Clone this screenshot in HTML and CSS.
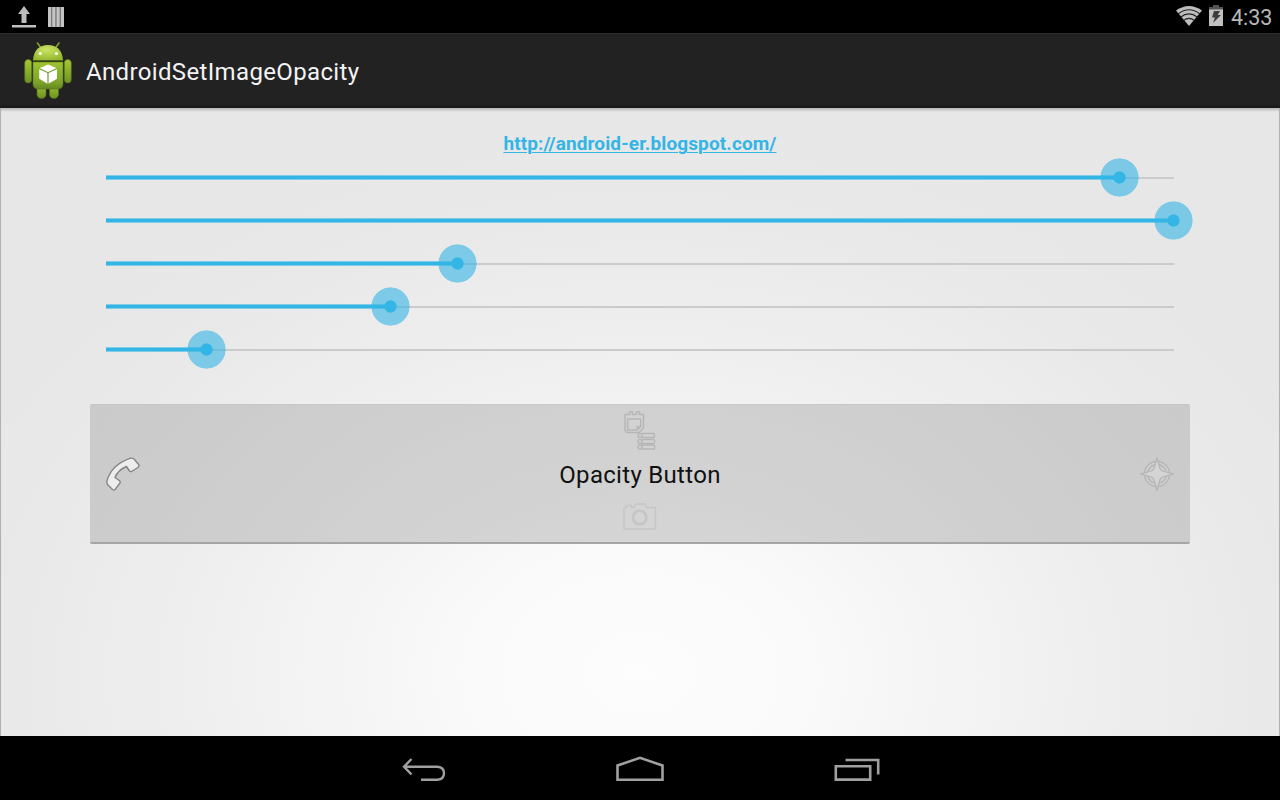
FILE: index.html
```html
<!DOCTYPE html>
<html lang="en">
<head>
<meta charset="utf-8">
<title>AndroidSetImageOpacity</title>
<link rel="stylesheet" href="styles.css">
</head>
<body>
<div class="status">
  <svg class="upload" width="24" height="22" viewBox="0 0 24 22"><path fill="#bebebe" d="M12 0l6 8h-3.500v9h-5V8H6zM0 19h24v2.500H0z"/></svg>
  <svg class="bars" width="16" height="20" viewBox="0 0 16 20"><path fill="#7a7a7a" d="M0 0h16v20H0z"/><path fill="#c4c4c4" d="M0 0h3v20H0zM4.300 0h3v20h-3zM8.600 0h3v20h-3zM13 0h3v20h-3z"/></svg>
  <svg class="wifi" width="26" height="20" viewBox="0 0 26 20"><path fill="#bebebe" d="M0 4.500Q13-4.500 26 4.500L13 20z"/><path d="M2 8Q13-.5 24 8M4.500 11.200Q13 4.500 21.500 11.200M7.500 14.600Q13 10 18.500 14.600" fill="none" stroke="#222" stroke-width="1.200"/></svg>
  <svg class="battery" width="14" height="21" viewBox="0 0 14 21"><path fill="#555" d="M4 0h6v2h4v3H0V2h4z"/><path fill="#c0c0c0" d="M0 4.500h14V21H0z"/><path fill="#3c3c3c" d="M5 6h6L8.700 10H12L4 18l2-5.500H3z"/></svg>
  <span class="clock">4:33</span>
</div>
<header class="bar">
  <svg class="robot" width="48" height="58" viewBox="0 0 48 58">
    <defs>
      <linearGradient id="skin" x2="0" y2="1"><stop stop-color="#a9c833"/><stop offset="1" stop-color="#6b9322"/></linearGradient>
      <linearGradient id="torso" x2="0" y2="1"><stop stop-color="#9fc32e"/><stop offset=".75" stop-color="#7ba329"/><stop offset="1" stop-color="#648820"/></linearGradient>
      <radialGradient id="dome" cx=".45" cy=".3" r=".75"><stop stop-color="#cbe364"/><stop offset="1" stop-color="#91b72a"/></radialGradient>
    </defs>
    <path d="M13.500 1l3.500 5M35 1l-3.500 5" stroke="#81a129" stroke-width="1.600" stroke-linecap="round"/>
    <g fill="url(#skin)" stroke="#526f1b" stroke-width=".6">
      <rect x=".7" y="17.500" width="7" height="23.500" rx="3.500"/><rect x="40.300" y="17.500" width="7" height="23.500" rx="3.500"/>
      <rect x="13" y="40" width="9" height="16.500" rx="4.300"/><rect x="25.500" y="40" width="9" height="16.500" rx="4.300"/>
    </g>
    <path fill="url(#torso)" stroke="#587620" stroke-width=".6" d="M9 20h30v22q0 5-5.500 5h-19Q9 47 9 42z"/>
    <path fill="url(#dome)" d="M9 18.500C9.500 8 15.500 3 24 3s14.500 5 15 15.500z"/>
    <path d="M9 19.200h30" stroke="#36451b" stroke-width="1"/>
    <circle cx="16.300" cy="11.500" r="1.600" fill="#fff"/><circle cx="32.500" cy="11.500" r="1.600" fill="#fff"/>
    <path fill="#fff" d="M24 22.500l9 3.800v10.500L24 42l-8.800-5.200V26.300z"/>
    <path d="M15.200 26.500l8.800 4.200 9-4.200M24 30.700V42" fill="none" stroke="#789b30" stroke-width="1.200"/>
  </svg>
  <h1 class="title">AndroidSetImageOpacity</h1>
</header>
<main class="content">
  <a class="link">http://android-er.blogspot.com/</a>
  <div class="sliders">
    <div class="slider" style="--value:1013.5px"><i class="fill"></i><i class="thumb"></i></div>
    <div class="slider" style="--value:1067.5px"><i class="fill"></i><i class="thumb"></i></div>
    <div class="slider" style="--value:351.5px"><i class="fill"></i><i class="thumb"></i></div>
    <div class="slider" style="--value:284.5px"><i class="fill"></i><i class="thumb"></i></div>
    <div class="slider" style="--value:100.5px"><i class="fill"></i><i class="thumb"></i></div>
  </div>
  <div class="button">
    <svg class="phone" width="34" height="34" viewBox="0 0 34 34"><path d="M24.500 1.200Q27 .8 28.500 2.500L32.800 7.800Q33.400 9 32 10.500L25.500 14.500Q24 15 23.200 13.500L20.500 9.500Q12 13 9 20.500L13.300 23.500Q14.600 24.500 14 26L9.300 32.200Q8 33.800 6.500 32.500L2 28Q.8 26.500.8 24.500Q5 8 24.500 1.200z" fill="#ededed" stroke="#858585" stroke-width="1.400" stroke-linejoin="round"/></svg>
    <div class="middle">
      <svg class="agenda" width="32" height="39" viewBox="0 0 32 39" fill="#d2d2d2" stroke="#b6b6b6" stroke-width="1.500"><path d="M1.500 3.500h4v-2.500h3v2.500h4v-2.500h3v2.500h4V17l-4.500 4.500H3L1 19.500V4z"/><path d="M3.700 8h13v7.500h-3.500V19H3.700zM13.200 19l3.500-3.500"/><g><rect x="17.500" y="22.500" width="13" height="4" rx="1"/><rect x="17.500" y="28.500" width="13" height="4" rx="1"/><rect x="17.500" y="34" width="13" height="4" rx="1"/><circle cx="16" cy="24.500" r="2"/><circle cx="16" cy="30.500" r="2"/><circle cx="16" cy="36" r="2"/></g></svg>
      <span class="label">Opacity Button</span>
      <svg class="camera" width="34" height="28" viewBox="0 0 34 28" fill="#d4d4d4" stroke="#c5c5c5" stroke-width="1.300"><path d="M1 4.500h2.500v-2h5v2h2.500l2-3.500h9l1.500 3.500H32.500v21.500H1z"/><circle cx="16.700" cy="14.500" r="6.700" stroke-width="2.600"/></svg>
    </div>
    <svg class="compass" width="34" height="34" viewBox="0 0 34 34" stroke="#b5b5b5" stroke-width="1.300"><circle cx="17" cy="17" r="12.500" fill="#cfcfcf"/><circle cx="17" cy="17" r="9.500" fill="none"/><path d="M17 .8l3 10.500q.7 2 2.700 2.700L33.200 17 22.700 20q-2 .7-2.700 2.700L17 33.200 14 22.700q-.7-2-2.700-2.700L.8 17 11.300 14q2-.7 2.700-2.700z" fill="#d4d4d4"/></svg>
  </div>
</main>
<nav class="nav">
  <svg width="46" height="28" viewBox="0 0 46 28" fill="none" stroke="#a0a0a0" stroke-width="2.400"><path d="M11.500 3L4 10.700 11.500 18.500M4 10.700H37.500q6.500.5 6.500 6.500t-6.500 6.500H21"/></svg>
  <svg width="48" height="28" viewBox="0 0 48 28" fill="none" stroke="#a0a0a0" stroke-width="2.600"><path d="M1.500 23.700V9.500L24 1.800 46.500 9.500v14.200z"/></svg>
  <svg width="46" height="28" viewBox="0 0 46 28" fill="none" stroke="#a0a0a0" stroke-width="2.600"><path d="M1.800 10.300h34.400v13.300H1.800zM11.500 4h32.700v14.500"/></svg>
</nav>
</body>
</html>
```
FILE: styles.css
```css
* { box-sizing: border-box; }
body {
  margin: 0;
  width: 1280px;
  height: 800px;
  display: flex;
  flex-direction: column;
  overflow: hidden;
  background: #000;
  font-family: Roboto, sans-serif;
}
svg { display: block; flex: none; }
.status {
  height: 33px;
  flex: none;
  display: flex;
  align-items: flex-start;
  padding: 6px 8px 0 12px;
}
.bars { margin-left: 12px; margin-top: 1px; }
.wifi { margin-left: auto; }
.battery { margin-left: 7px; margin-top: -1px; }
.clock {
  width: 41px;
  margin-left: 8px;
  color: #b8b8b8;
  font-size: 21.5px;
  line-height: 24px;
  white-space: nowrap;
}
.bar {
  height: 75px;
  flex: none;
  display: flex;
  align-items: flex-start;
  padding: 8px 24px 0;
  background: #222;
  border-top: 1px solid #2d2d2d;
  border-bottom: 3px solid #1b1b1b;
}
.title {
  margin: 14px 0 0 14px;
  color: #f3f3f3;
  font-size: 24px;
  line-height: 32px;
  font-weight: 400;
  letter-spacing: .35px;
}
.content {
  height: 628px;
  flex: none;
  display: flex;
  flex-direction: column;
  align-items: center;
  padding-top: 23px;
  border-left: 1px solid #b0b0b0;
  border-right: 1px solid #b0b0b0;
  background:
    linear-gradient(rgba(0, 0, 0, .22), rgba(0, 0, 0, 0)) 0 0 / 100% 4px no-repeat,
    radial-gradient(ellipse 760px 560px at 50% 565px, #fdfdfd 0, #f9f9f9 25%, #f0f0f0 55%, #e9e9e9 82%, #e7e7e7 100%);
}
.link {
  color: #33b5e5;
  font-size: 19px;
  line-height: 25px;
  font-weight: 700;
  letter-spacing: .12px;
  text-decoration: underline;
  text-decoration-thickness: 1px;
  text-underline-offset: 2px;
}
.sliders { width: 1068px; }
.slider {
  height: 43px;
  position: relative;
  display: flex;
  align-items: flex-start;
  background: linear-gradient(#cbcbcb, #cbcbcb) 0 21px / 100% 2px no-repeat;
}
.fill {
  width: var(--value);
  height: 5px;
  margin-top: 19px;
  background: linear-gradient(#80cce7 1px, #33b5e5 1px 4px, #80cce7 4px);
}
.thumb {
  position: absolute;
  left: calc(var(--value) - 19.5px);
  top: 2px;
  width: 39px;
  height: 39px;
  border-radius: 50%;
  background: radial-gradient(circle, #33b5e5 5.700px, rgba(51, 181, 229, .6) 6.500px 18.700px, rgba(51, 181, 229, 0) 19.500px);
}
.button {
  width: 1100px;
  height: 140px;
  margin-top: 33px;
  padding: 0 16px;
  display: flex;
  align-items: center;
  justify-content: space-between;
  border-radius: 2px;
  background: rgba(158, 158, 158, .4);
  border-top: 1px solid rgba(180, 180, 180, .25);
  border-bottom: 2px solid #a5a5a5;
}
.phone { margin-top: 1px; }
.middle {
  height: 138px;
  display: flex;
  flex-direction: column;
  align-items: center;
}
.agenda { margin: 6px 0 0 -1px; }
.label {
  margin-top: 9px;
  color: #111;
  font-size: 24px;
  line-height: 32px;
  letter-spacing: .3px;
}
.camera { margin: 12px 0 0 -1px; }
.nav {
  flex: 1;
  display: flex;
  justify-content: center;
  align-items: center;
  gap: 170px;
  padding-top: 3px;
}
```
